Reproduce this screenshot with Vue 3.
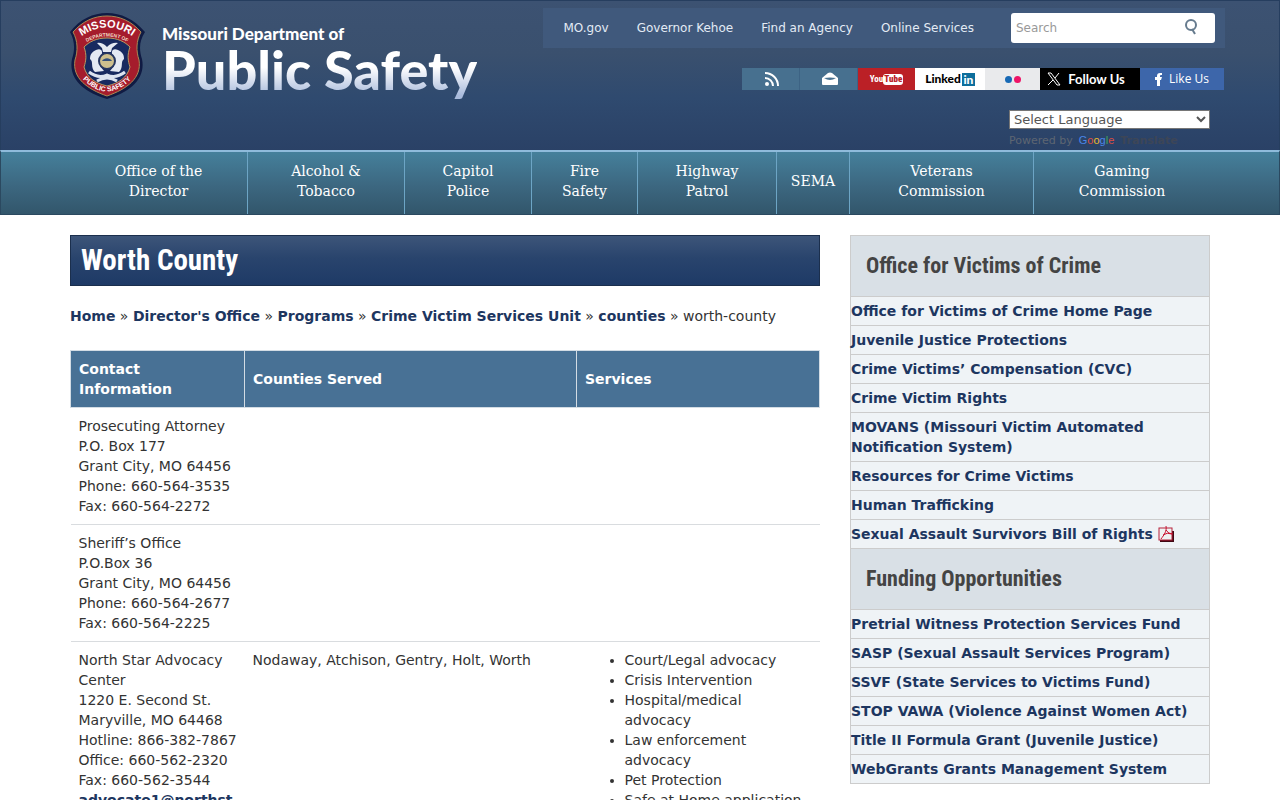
<template>
  <div class="page">
    <header class="site-header">
      <div class="container header-inner">
        <a href="#" class="brand">
          <svg class="badge" viewBox="0 0 76 88" width="76" height="88" aria-hidden="true">
            <defs>
              <path id="arc-top" d="M9 26 Q37 5 65 26" />
              <path id="arc-dept" d="M15 31 Q37 18 59 31" />
              <path id="arc-bottom" d="M9 63 Q37 96 65 63" />
            </defs>
            <path class="badge-edge" d="M37 1 C51 1 64 7 75 20 C69 29 69 38 72 47 C76 67 60 80 37 87 C14 80 -2 67 2 47 C5 38 5 29 0 20 C10 7 23 1 37 1Z" />
            <path class="badge-gold" d="M37 4 C50 4 61 9 71 20 C66 29 66 39 69 48 C72 66 57 77 37 84 C17 77 2 66 5 48 C8 39 8 29 3 20 C13 9 24 4 37 4Z" />
            <path class="badge-blue" d="M37 26 C48 26 55 30 60 35 C57 43 58 49 60 55 C57 66 49 71 37 74 C25 71 17 66 14 55 C16 49 17 43 14 35 C19 30 26 26 37 26Z" />
            <path class="badge-silver" d="M27 31 Q32 30 37 35 Q42 30 48 31 L42 36 L41 40 H33 L32 36Z" />
            <path class="badge-silver" d="M26 38 C32 35 34 41 30 45 L30 54 L34 59 L25 60 C20 55 24 50 20 47 C20 42 22 40 26 38Z" />
            <path class="badge-silver" d="M48 38 C42 35 40 41 44 45 L44 54 L40 59 L49 60 C54 55 50 50 54 47 C54 42 52 40 48 38Z" />
            <circle class="badge-seal" cx="37" cy="49" r="8" />
            <path class="badge-field" d="M32 49 A6 6 0 0 1 42 49Z" />
            <path class="badge-ribbon" d="M19 60 Q28 67 37 63 Q46 67 55 60 M27 69 Q37 63 47 69" />
            <text class="badge-name"><textPath href="#arc-top" startOffset="50%">MISSOURI</textPath></text>
            <text class="badge-dept"><textPath href="#arc-dept" startOffset="50%">DEPARTMENT OF</textPath></text>
            <text class="badge-safety"><textPath href="#arc-bottom" startOffset="50%">PUBLIC SAFETY</textPath></text>
          </svg>
          <span class="brand-text">
            <span class="brand-small">Missouri Department of</span>
            <span class="brand-large">Public Safety</span>
          </span>
        </a>

        <div class="header-tools">
          <div class="top-bar">
            <nav class="top-links">
              <a v-for="link in topLinks" :key="link" href="#">{{ link }}</a>
            </nav>
            <form class="search" @submit.prevent>
              <input v-model="query" type="search" placeholder="Search" aria-label="Search" />
              <button type="submit" aria-label="Submit search">
                <svg viewBox="0 0 16 18" width="16" height="18">
                  <circle cx="8" cy="7" r="5" />
                  <path d="M9 11 L12 16" />
                </svg>
              </button>
            </form>
          </div>

          <div class="social">
            <a href="#" class="rss" aria-label="RSS">
              <svg viewBox="0 0 14 14" width="14" height="14">
                <circle cx="2" cy="12" r="2" />
                <path d="M0 6 A8 8 0 0 1 8 14 M0 1 A13 13 0 0 1 13 14" />
              </svg>
            </a>
            <a href="#" class="mail" aria-label="Email">
              <svg viewBox="0 0 16 14" width="16" height="14">
                <path d="M0 6 L6 1 Q8 0 10 1 L16 6 V12 Q16 13 15 13 H1 Q0 13 0 12Z" fill="#fff" />
                <path d="M2 6 Q8 5 14 6 Q8 10 2 6Z" fill="#47708f" />
              </svg>
            </a>
            <a href="#" class="youtube"><span>You</span><b>Tube</b></a>
            <a href="#" class="linkedin"><span>Linked</span><b>in</b></a>
            <a href="#" class="flickr" aria-label="Flickr"><i></i><i></i></a>
            <a href="#" class="twitter">
              <svg viewBox="0 0 14 14" width="14" height="14">
                <path d="M1 1 H4 L13 13 H10Z M12 1 L8 6 M6 8 L1 13" />
              </svg>
              <span>Follow Us</span>
            </a>
            <a href="#" class="facebook">
              <svg viewBox="0 0 7 13" width="7" height="13">
                <path d="M2 13 V7 H0 V4 H2 V3 Q2 0 5 0 H7 V2 H6 Q5 2 5 3 V4 H7 L6 7 H5 V13Z" />
              </svg>
              <span>Like Us</span>
            </a>
          </div>

          <div class="translate">
            <select v-model="language" aria-label="Select Language">
              <option value="">Select Language</option>
              <option value="es">Spanish</option>
            </select>
            <p>
              <span>Powered by</span>
              <span class="google"><i>G</i><i>o</i><i>o</i><i>g</i><i>l</i><i>e</i></span>
              <span class="translate-name">Translate</span>
            </p>
          </div>
        </div>
      </div>
    </header>

    <nav class="main-nav">
      <ul class="container">
        <li v-for="item in mainLinks" :key="item.join(' ')">
          <a href="#"><span v-for="line in item" :key="line">{{ line }}</span></a>
        </li>
      </ul>
    </nav>

    <div class="container layout">
      <main class="content">
        <h1>Worth County</h1>
        <p class="breadcrumb">
          <template v-for="crumb in crumbs" :key="crumb"><a href="#">{{ crumb }}</a> » </template>worth-county
        </p>
        <table class="services">
          <thead>
            <tr>
              <th class="col-contact">Contact Information</th>
              <th class="col-counties">Counties Served</th>
              <th class="col-services">Services</th>
            </tr>
          </thead>
          <tbody>
            <tr v-for="row in rows" :key="row.contact[0]">
              <td class="contact">
                <div v-for="line in row.contact" :key="line">{{ line }}</div>
                <a v-if="row.email" href="#">{{ row.email }}</a>
              </td>
              <td>{{ row.counties }}</td>
              <td>
                <ul v-if="row.services">
                  <li v-for="service in row.services" :key="service">{{ service }}</li>
                </ul>
              </td>
            </tr>
          </tbody>
        </table>
      </main>

      <aside class="sidebar">
        <section v-for="group in sidebar" :key="group.title">
          <h2>{{ group.title }}</h2>
          <ul>
            <li v-for="link in group.links" :key="link.label">
              <a href="#">{{ link.label }}</a>
              <svg v-if="link.pdf" class="pdf" viewBox="0 0 16 16" width="16" height="16" aria-label="PDF">
                <path d="M2 15 H15 V5" fill="none" stroke="#400914" stroke-width="2" />
                <rect x="1" y="2" width="13" height="12" fill="#eef2f2" stroke="#b8203a" />
                <path d="M8 0 C9 5 6 9 3 13 M8 4 Q10 8 15 8 M5 9 Q9 6 14 8" fill="none" stroke="#c8102e" />
              </svg>
            </li>
          </ul>
        </section>
      </aside>
    </div>
  </div>
</template>

<script setup>
import { ref } from 'vue'

const query = ref('')
const language = ref('')

const topLinks = ['MO.gov', 'Governor Kehoe', 'Find an Agency', 'Online Services']

const mainLinks = [
  ['Office of the', 'Director'],
  ['Alcohol &', 'Tobacco'],
  ['Capitol', 'Police'],
  ['Fire', 'Safety'],
  ['Highway', 'Patrol'],
  ['SEMA'],
  ['Veterans', 'Commission'],
  ['Gaming', 'Commission']
]

const crumbs = ['Home', "Director's Office", 'Programs', 'Crime Victim Services Unit', 'counties']

const rows = [
  {
    contact: [
      'Prosecuting Attorney',
      'P.O. Box 177',
      'Grant City, MO 64456',
      'Phone: 660-564-3535',
      'Fax: 660-564-2272'
    ]
  },
  {
    contact: [
      'Sheriff’s Office',
      'P.O.Box 36',
      'Grant City, MO 64456',
      'Phone: 660-564-2677',
      'Fax: 660-564-2225'
    ]
  },
  {
    contact: [
      'North Star Advocacy Center',
      '1220 E. Second St.',
      'Maryville, MO 64468',
      'Hotline: 866-382-7867',
      'Office: 660-562-2320',
      'Fax: 660-562-3544'
    ],
    email: 'advocate1@northst',
    counties: 'Nodaway, Atchison, Gentry, Holt, Worth',
    services: [
      'Court/Legal advocacy',
      'Crisis Intervention',
      'Hospital/medical advocacy',
      'Law enforcement advocacy',
      'Pet Protection',
      'Safe at Home application'
    ]
  }
]

const sidebar = [
  {
    title: 'Office for Victims of Crime',
    links: [
      { label: 'Office for Victims of Crime Home Page' },
      { label: 'Juvenile Justice Protections' },
      { label: 'Crime Victims’ Compensation (CVC)' },
      { label: 'Crime Victim Rights' },
      { label: 'MOVANS (Missouri Victim Automated Notification System)' },
      { label: 'Resources for Crime Victims' },
      { label: 'Human Trafficking' },
      { label: 'Sexual Assault Survivors Bill of Rights', pdf: true }
    ]
  },
  {
    title: 'Funding Opportunities',
    links: [
      { label: 'Pretrial Witness Protection Services Fund' },
      { label: 'SASP (Sexual Assault Services Program)' },
      { label: 'SSVF (State Services to Victims Fund)' },
      { label: 'STOP VAWA (Violence Against Women Act)' },
      { label: 'Title II Formula Grant (Juvenile Justice)' },
      { label: 'WebGrants Grants Management System' }
    ]
  }
]
</script>

<style>
body {
  margin: 0;
  background: #fff;
}
</style>

<style scoped>
* {
  box-sizing: border-box;
}

.page {
  font-family: "DejaVu Sans", sans-serif;
  font-size: 14px;
  line-height: 20px;
  color: #333;
}

.page a {
  text-decoration: none;
}

.container {
  width: 100%;
  max-width: 1170px;
  margin: 0 auto;
  padding: 0 15px;
}

.site-header {
  min-height: 150px;
  background: linear-gradient(#3c5272, #3a506e 35%, #2f4a6f 65%, #2a4166);
  border: 1px solid #263e5f;
  border-bottom: none;
}

.header-inner {
  display: flex;
  justify-content: space-between;
  padding-right: 0;
}

.brand {
  display: flex;
  gap: 16px;
  padding-top: 11px;
}

.badge {
  display: block;
}

.badge-edge {
  fill: #101b43;
}

.badge-gold {
  fill: #a51c2c;
  stroke: #a98a54;
  stroke-width: 1;
}

.badge-blue {
  fill: #182a60;
  stroke: #b79a62;
  stroke-width: 1;
}

.badge-silver {
  fill: #e4e9f3;
}

.badge-seal {
  fill: #cdbf8d;
  stroke: #263660;
  stroke-width: 2;
}

.badge-field {
  fill: #34507c;
}

.badge-ribbon {
  fill: none;
  stroke: #dce3f0;
  stroke-width: 3;
}

.badge text {
  fill: #fff;
  font-family: "Liberation Sans", sans-serif;
  font-weight: 700;
  text-anchor: middle;
}

.badge-name {
  font-size: 11px;
}

.badge .badge-dept {
  font-size: 5px;
  fill: #f1d9c5;
}

.badge-safety {
  font-size: 7px;
}

.brand-text {
  display: flex;
  flex-direction: column;
  padding-top: 11px;
  font-family: Lato, sans-serif;
  font-weight: 900;
  color: #fff;
}

.brand-small {
  font-size: 17px;
  line-height: 22px;
}

.brand-large {
  font-size: 54px;
  line-height: 50px;
  padding-bottom: 6px;
  color: transparent;
  background: linear-gradient(#fff 40%, #a9bbdc 90%);
  background-clip: text;
}

.header-tools {
  display: flex;
  flex-direction: column;
  align-items: flex-end;
  padding-top: 7px;
}

.top-bar {
  display: flex;
  align-items: center;
  gap: 37px;
  height: 40px;
  padding: 0 10px 0 20px;
  background: #40597c;
}

.top-links {
  display: flex;
  gap: 28px;
  font-size: 12px;
}

.top-links a {
  color: #e3ebf5;
}

.search {
  display: flex;
  width: 204px;
  height: 30px;
  background: #fff;
  border-radius: 3px;
}

.search input {
  flex: 1;
  min-width: 0;
  padding: 0 5px;
  border: none;
  background: transparent;
  font-family: inherit;
  font-size: 12px;
  outline: none;
}

.search input::placeholder {
  color: #999;
}

.search button {
  display: grid;
  place-items: center;
  width: 48px;
  padding: 0 0 2px;
  border: none;
  background: transparent;
  cursor: pointer;
}

.search svg {
  fill: none;
  stroke: #667b8e;
  stroke-width: 2;
}

.social {
  display: flex;
  height: 22px;
  margin: 20px 1px 20px 0;
}

.social a {
  display: flex;
  align-items: center;
  justify-content: center;
  color: #fff;
  font-family: "Open Sans", sans-serif;
  font-size: 12px;
}

.rss,
.mail {
  width: 58px;
  padding-left: 3px;
  background: #47708f;
  border-right: 1px solid #3d6384;
}

.rss svg {
  fill: #fff;
}

.rss path {
  fill: none;
  stroke: #fff;
  stroke-width: 2;
}

.social .youtube {
  width: 57px;
  background: #bb2026;
  font-family: "Roboto Condensed", "Liberation Sans", sans-serif;
  font-size: 9px;
  font-weight: 700;
}

.youtube b {
  padding: 0 1px;
  border-radius: 3px;
  background: #fff;
  color: #bb2026;
  line-height: 11px;
}

.social .linkedin {
  gap: 1px;
  width: 70px;
  background: #fff;
  color: #000;
  font-family: Lato, sans-serif;
  font-weight: 900;
}

.linkedin b {
  width: 13px;
  background: #0d6e9c;
  color: #fff;
  line-height: 13px;
  text-align: center;
}

.flickr {
  gap: 2px;
  width: 55px;
  background: #e9eaec;
}

.flickr i {
  width: 7px;
  height: 7px;
  border-radius: 50%;
  background: #1769b5;
}

.flickr i + i {
  background: #ee1467;
}

.social .twitter {
  gap: 7px;
  width: 100px;
  padding-right: 8px;
  background: #000;
  font-family: Lato, sans-serif;
  font-size: 13px;
  font-weight: 700;
}

.twitter svg {
  fill: none;
  stroke: #fff;
}

.facebook {
  gap: 7px;
  width: 84px;
  background: #3d66aa;
}

.facebook svg {
  fill: #fff;
}

.translate {
  width: 201px;
  margin-right: 15px;
}

.translate select {
  display: block;
  width: 100%;
  height: 19px;
  padding: 0;
  border: 1px solid #767676;
  background: #fff;
  color: #555;
  font-family: inherit;
  font-size: 13px;
}

.translate p {
  display: flex;
  gap: 6px;
  margin: 3px 0 0;
  font-size: 11px;
  line-height: 17px;
  color: #5e6672;
}

.google {
  font-family: "Liberation Sans", sans-serif;
}

.google i {
  font-style: normal;
  color: #4a86e8;
}

.google i:nth-child(2),
.google i:nth-child(6) {
  color: #dc4d43;
}

.google i:nth-child(3) {
  color: #eab92d;
}

.google i:nth-child(5) {
  color: #40a45c;
}

.translate-name {
  font-weight: 700;
  color: #3d4657;
}

.main-nav {
  height: 65px;
  background: linear-gradient(#45809b, #3c6780 55%, #32566b);
  border: 1px solid #2b4960;
  border-top: 2px solid #8fbbdb;
}

.main-nav ul {
  display: grid;
  grid-template-columns: 177fr 157fr 127fr 106fr 139fr 73fr 184fr 177fr;
  height: 100%;
  list-style: none;
}

.main-nav li + li {
  border-left: 1px solid #6da5c5;
}

.main-nav a {
  display: flex;
  flex-direction: column;
  align-items: center;
  justify-content: center;
  height: 58px;
  font-family: "DejaVu Serif", serif;
  font-size: 14px;
  color: #fff;
}

.layout {
  display: grid;
  grid-template-columns: minmax(0, 750fr) minmax(0, 360fr);
  gap: 30px;
  align-items: start;
  padding-top: 20px;
}

.content h1 {
  margin: 0 0 20px;
  padding: 0 10px;
  border: 1px solid #1b2f4d;
  background: linear-gradient(#3d5579, #29446d 45%, #1e3a66);
  color: #fff;
  font-family: "Roboto Condensed", "Liberation Sans", sans-serif;
  font-size: 29px;
  line-height: 49px;
}

.breadcrumb {
  margin: 0 0 24px;
}

.breadcrumb a,
.services a,
.sidebar a {
  color: #1d3660;
  font-weight: 700;
}

.services {
  width: 100%;
  table-layout: fixed;
  border-collapse: collapse;
}

.col-contact {
  width: 174px;
}

.col-services {
  width: 243px;
}

.services th {
  padding: 8px;
  border: 1px solid #d3dce4;
  background: #487195;
  color: #fff;
  text-align: left;
}

.services td {
  padding: 8px;
  border-bottom: 1px solid #d9dcdf;
  vertical-align: top;
}

.services .contact {
  padding-right: 4px;
}

.services ul {
  margin: 0;
  padding-left: 40px;
}

.sidebar {
  border: 1px solid #ccc;
  border-bottom: none;
  background: #eff3f6;
}

.sidebar h2 {
  margin: 0;
  padding: 0 15px;
  border-bottom: 1px solid #ccc;
  background: #d9e0e6;
  color: #444;
  font-family: "Roboto Condensed", "Liberation Sans", sans-serif;
  font-size: 22px;
  line-height: 60px;
}

.sidebar ul {
  margin: 0;
  padding: 0;
  list-style: none;
}

.sidebar li {
  padding: 4px 0;
  border-bottom: 1px solid #ccc;
}

.pdf {
  margin-left: 5px;
  vertical-align: text-bottom;
}
</style>
